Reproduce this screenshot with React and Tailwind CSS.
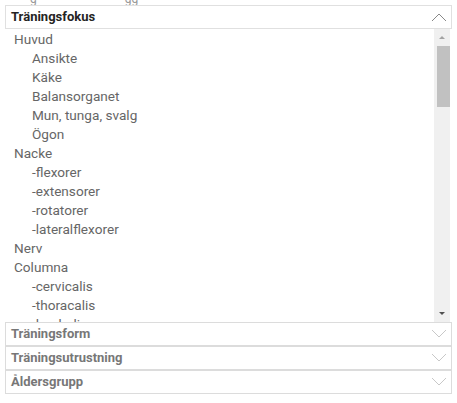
import React from 'react';

const items = [
  ['Huvud', 0],
  ['Ansikte', 1],
  ['Käke', 1],
  ['Balansorganet', 1],
  ['Mun, tunga, svalg', 1],
  ['Ögon', 1],
  ['Nacke', 0],
  ['-flexorer', 1],
  ['-extensorer', 1],
  ['-rotatorer', 1],
  ['-lateralflexorer', 1],
  ['Nerv', 0],
  ['Columna', 0],
  ['-cervicalis', 1],
  ['-thoracalis', 1],
  ['-lumbalis', 1],
];

const Chevron = ({ up }) => (
  <svg width="16" height="10" viewBox="0 0 16 10" fill="none">
    <path
      d={up ? 'M1 9 L8 2 L15 9' : 'M1 1 L8 8 L15 1'}
      stroke={up ? '#888' : '#c8c8c8'}
      strokeWidth="1"
    />
  </svg>
);

const Collapsed = ({ label }) => (
  <div className="flex h-[24px] items-center justify-between border border-[#dcdcdc] bg-white pl-[5px] pr-[4px]">
    <span className="text-[13px] font-bold text-[#777]">{label}</span>
    <Chevron />
  </div>
);

export default function App() {
  return (
    <div className="h-[403px] w-[457px] overflow-hidden bg-white font-['Roboto',sans-serif]">
      {/* tail of the text above, cut off */}
      <div className="h-[5px] overflow-hidden pl-[30px] text-[12px] leading-[8px] text-[#999]">
        <span className="relative -top-[5px]">g</span>
        <span className="relative -top-[5px] ml-[88px]">gg</span>
      </div>

      <div className="px-[5px]">
        <div className="flex h-[24px] items-center justify-between border border-[#e0e0e0] pl-[5px] pr-[4px]">
          <span className="text-[13px] font-bold text-[#252423]">Träningsfokus</span>
          <Chevron up />
        </div>

        <div className="flex h-[293px]">
          <div className="flex-1 overflow-hidden pt-[1px]">
            {items.map(([label, level]) => (
              <div
                key={label}
                className={`h-[19px] text-[13.6px] leading-[19px] text-[#666] ${level ? 'pl-[27px]' : 'pl-[9px]'}`}
              >
                {label}
              </div>
            ))}
          </div>
          <div className="mr-[2px] flex w-[16px] flex-col bg-[#f0f0f0]">
            <div className="flex h-[17px] items-center justify-center">
              <div className="h-0 w-0 border-x-[3px] border-b-[3px] border-x-transparent border-b-[#a3a3a3]" />
            </div>
            <div className="ml-[3px] h-[61px] bg-[#c1c1c1]" />
            <div className="flex-1" />
            <div className="flex h-[17px] items-center justify-center">
              <div className="h-0 w-0 border-x-[3px] border-t-[3px] border-x-transparent border-t-[#505050]" />
            </div>
          </div>
        </div>

        <Collapsed label="Träningsform" />
        <Collapsed label="Träningsutrustning" />
        <Collapsed label="Åldersgrupp" />
      </div>
    </div>
  );
}
